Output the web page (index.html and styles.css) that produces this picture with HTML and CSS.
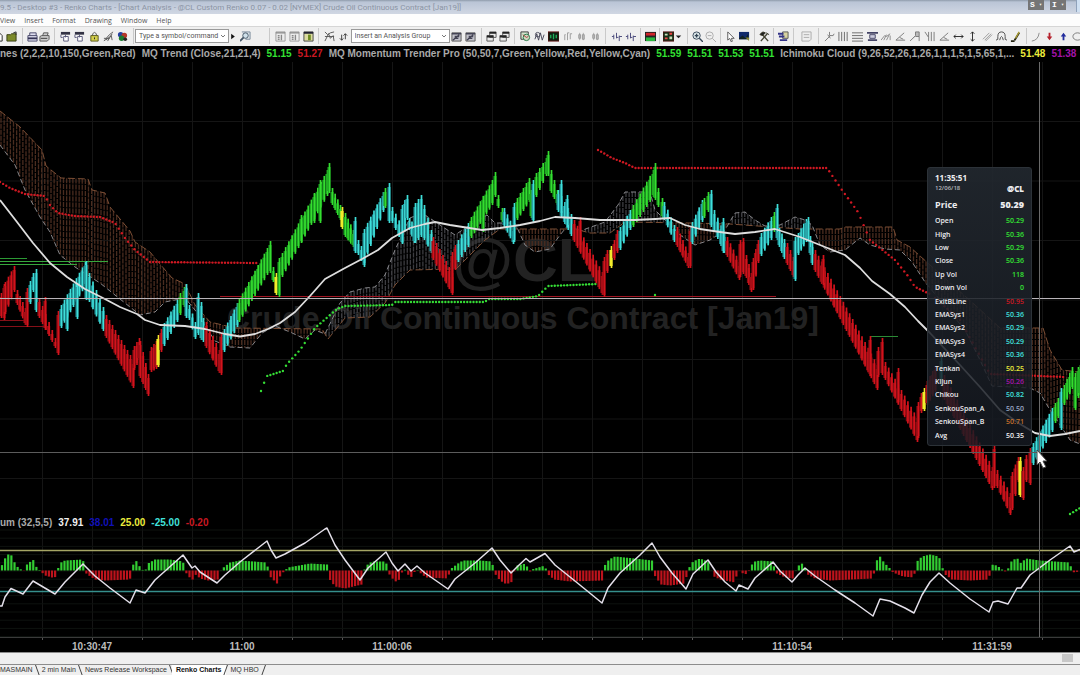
FILE: index.html
```html
<!DOCTYPE html>
<html lang="en">
<head>
<meta charset="utf-8">
<title>Renko Charts - Chart Analysis</title>
<link rel="stylesheet" href="styles.css">
</head>
<body>
<svg class="symbols" aria-hidden="true">
  <symbol id="doc" viewBox="0 0 12 12"><path d="M2 2h5l3 3v6H2z" fill="#fff" stroke="#222"/></symbol>
  <symbol id="folder" viewBox="0 0 12 12"><path d="M1 4h4l1-1h5v8H1z" fill="#7c8a2a" stroke="#333a10"/><path d="M8 2l3-1v3" fill="none" stroke="#222"/></symbol>
  <symbol id="save" viewBox="0 0 12 12"><path d="M1 5h10v6H1zM3 5V2h7v3" fill="#dde" stroke="#446"/><path d="M1 8h10" stroke="#335" stroke-width="2"/></symbol>
  <symbol id="print" viewBox="0 0 12 12"><path d="M1 6l2-1h8v4l-2 2H1zM4 5l1-3h5l-1 3" fill="#ccc" stroke="#555"/><path d="M2 8h7" stroke="#333"/></symbol>
  <symbol id="window" viewBox="0 0 12 12"><path d="M1 1h10v3H1z" fill="#334"/><path d="M4 6h5v5H4zM6 4v3M1 4v3h2" fill="#fff" stroke="#557"/></symbol>
  <symbol id="lock" viewBox="0 0 12 12"><path d="M4 5V3q2-3 4 0v2" fill="none" stroke="#555"/><path d="M2 5h8v6H2z" fill="#d3cf4c" stroke="#55551a"/><path d="M6 7v2" stroke="#222"/></symbol>
  <symbol id="draw" viewBox="0 0 12 12"><path d="M1 11L7 4l4-3M3 10l6-5 1 5M1 8h6M5 11l5-8" fill="none" stroke="#555"/></symbol>
  <symbol id="palette" viewBox="0 0 12 12"><circle cx="4" cy="4" r="3" fill="#253fa0"/><circle cx="8" cy="5" r="3" fill="#b5372a"/><circle cx="5" cy="8" r="3" fill="#1c7a31"/><circle cx="9" cy="9" r="2" fill="#222"/></symbol>
  <symbol id="find" viewBox="0 0 12 12"><path d="M2 1h9v8H6" fill="#dde3e8" stroke="#789"/><circle cx="6" cy="5" r="3" fill="#cfe0ea" stroke="#456"/><path d="M4 7l-4 4" stroke="#456" stroke-width="2"/></symbol>
  <symbol id="panel" viewBox="0 0 12 12"><path d="M1 1h10v10H1z" fill="#eee" stroke="#999"/><path d="M1 2h10M3 5h2M3 7h2M3 9h2M7 4v6" stroke="#888" stroke-width="1.5"/></symbol>
  <symbol id="panelhot" viewBox="0 0 12 12"><path d="M1 1h10v10H1z" fill="#dcdca0" stroke="#444"/><path d="M1 2h10" stroke="#223" stroke-width="2"/><path d="M7 4v6" stroke="#6d8a20" stroke-width="3"/></symbol>
  <symbol id="chart" viewBox="0 0 12 12"><path d="M1 1l3 3 3-2 4-1M1 11l4-8 2 5 3-3 1 6M1 6h10" fill="none" stroke="#555"/></symbol>
  <symbol id="arrows" viewBox="0 0 12 12"><path d="M4 4v6M2 8l2 2 2-2M8 9V3M6 5l2-2 2 2" fill="none" stroke="#333"/></symbol>
  <symbol id="formula" viewBox="0 0 12 12"><path d="M1 2h10v9H1z" fill="#c4c4cc" stroke="#555"/><path d="M1 3h10M2 10l7-6M4 6h5M3 8h5" stroke="#445" stroke-width="1.5"/></symbol>
  <symbol id="layers" viewBox="0 0 12 12"><path d="M4 1h7v6H4zM1 5h7v6H1z" fill="#e9e9e9" stroke="#555"/><path d="M4 2h7M1 6h7" stroke="#222" stroke-width="2"/></symbol>
  <symbol id="clock" viewBox="0 0 12 12"><path d="M1 1h8v8H1z" fill="#d2e7cf" stroke="#333"/><circle cx="7" cy="7" r="3.5" fill="#cfd9c1" stroke="#274"/><path d="M3 4l4 3 2-1" fill="none" stroke="#a33"/></symbol>
  <symbol id="wave" viewBox="0 0 12 12"><path d="M1 9L3 3l2 7 2-8 2 8 2-6" fill="none" stroke="#445"/><circle cx="4" cy="4" r="2.500" fill="none" stroke="#556"/></symbol>
  <symbol id="blackchart" viewBox="0 0 12 12"><path d="M0 1h12v10H0z" fill="#101c10" stroke="#611"/><path d="M3 8V4M6 9V3M9 8V4" stroke="#2a5" stroke-width="1.500"/></symbol>
  <symbol id="bars" viewBox="0 0 12 12"><path d="M3 10V4h1M6 10V2h2M9 9V3h2" fill="none" stroke="#999"/></symbol>
  <symbol id="candles" viewBox="0 0 12 12"><path d="M4 2v8M8 2v8" stroke="#aaa"/><path d="M3 4h2v4H3zM7 4h2v5H7z" fill="#bbb" stroke="#999"/></symbol>
  <symbol id="spacing" viewBox="0 0 12 12"><path d="M1 6h2M3 4v5M6 2v6M6 7h2M9 5v6M9 6h3" fill="none" stroke="#447"/></symbol>
  <symbol id="redgreen" viewBox="0 0 12 12"><path d="M0 1h12v10H0z" fill="#222"/><path d="M1 2h10v3H1z" fill="#d1242a"/><path d="M1 7h10v4H1z" fill="#29b63f"/></symbol>
  <symbol id="matrix" viewBox="0 0 12 12"><path d="M0 1h12v10H0z" fill="#143016" stroke="#511"/><path d="M2 3h3v2H2zM7 6h3v3H7z" fill="#cdb"/><path d="M7 3h3M2 8h3" stroke="#e44" stroke-width="2"/></symbol>
  <symbol id="zoomin" viewBox="0 0 12 12"><circle cx="5" cy="5" r="4" fill="#dde8ea" stroke="#345"/><path d="M8 8l4 4M3 5h4M5 3v4" stroke="#345" stroke-width="1.500"/></symbol>
  <symbol id="zoomout" viewBox="0 0 12 12"><circle cx="5" cy="5" r="4" fill="none" stroke="#aaa"/><path d="M8 8l4 4M3 5h4" stroke="#aaa"/></symbol>
  <symbol id="pointer" viewBox="0 0 12 12"><path d="M3 1v9l2-2 2 4 1-1-1-3h3z" fill="#fff" stroke="#555"/></symbol>
  <symbol id="screen" viewBox="0 0 12 12"><path d="M0 1h11v8H0z" fill="#112a6b"/><path d="M0 8l4-3 3 3 3-5v6H0z" fill="#122"/><path d="M7 7h4v4z" fill="#883"/></symbol>
  <symbol id="hammer" viewBox="0 0 12 12"><path d="M2 11l7-8M2 2l8 9" stroke="#443" stroke-width="1.500"/><path d="M1 4l3-3 3 1-3 3zM8 2l3 2" fill="#222" stroke="#332"/></symbol>
  <symbol id="strategy" viewBox="0 0 12 12"><path d="M5 1h6v7H5z" fill="#d8d3a0" stroke="#555"/><path d="M0 3h6M1 6h6M2 10h8" stroke="#338" stroke-width="2"/></symbol>
  <symbol id="note" viewBox="0 0 12 12"><path d="M1 1h10v8l-2 2H1zM3 4h6M3 7h6" fill="#eee" stroke="#aaa"/></symbol>
  <symbol id="wrench" viewBox="0 0 12 12"><path d="M1 11l6-6M6 1v4h4l1-2M4 4l3 4" fill="none" stroke="#777"/></symbol>
  <symbol id="vlines" viewBox="0 0 12 12"><path d="M1 1v10M4 1v10M7 1v10M10 1v10" stroke="#666"/></symbol>
  <symbol id="hlines" viewBox="0 0 12 12"><path d="M0 2h12M0 5h12M0 8h12M0 11h12" stroke="#666"/></symbol>
  <symbol id="range" viewBox="0 0 12 12"><path d="M0 2h12M1 10h10" stroke="#446" stroke-width="2"/><path d="M3 4h6v4H3z" fill="#ccd" stroke="#446"/></symbol>
  <symbol id="arc" viewBox="0 0 12 12"><path d="M0 10l4-5 2 1 4-3M3 10l3-6M6 10l3-6M10 10V5" fill="none" stroke="#888"/></symbol>
  <symbol id="angle" viewBox="0 0 12 12"><path d="M1 10h10M1 10l9-8M5 7l4 2" fill="none" stroke="#777"/></symbol>
  <symbol id="flag" viewBox="0 0 12 12"><path d="M0 11l6-6V1h4v5H6M10 6v5" fill="#bbb" stroke="#777"/></symbol>
  <symbol id="fan" viewBox="0 0 12 12"><path d="M1 1l4 6V1M5 7v4M8 1v10M11 1v10" fill="none" stroke="#777"/></symbol>
  <symbol id="harrow" viewBox="0 0 12 12"><path d="M1 6h10M3 4L1 6l2 2M9 4l2 2-2 2" fill="none" stroke="#222"/></symbol>
  <symbol id="varrow" viewBox="0 0 12 12"><path d="M6 1v10M4 3l2-2 2 2M4 9l2 2 2-2" fill="none" stroke="#222"/></symbol>
  <symbol id="channel" viewBox="0 0 12 12"><path d="M1 9l7-7M3 10l7-7M4 11l7-7" stroke="#999"/></symbol>
  <symbol id="arch" viewBox="0 0 12 12"><path d="M0 10q3 0 2-4 0-5 4-5t4 5q-1 4 2 4M4 10q2-8 4 0" fill="none" stroke="#444"/></symbol>
  <symbol id="pen" viewBox="0 0 12 12"><path d="M1 11h4M5 10l5-8" stroke="#221" stroke-width="2"/><path d="M6 8l4-7" stroke="#a89b36" stroke-width="1.500"/></symbol>
  <symbol id="curve" viewBox="0 0 12 12"><path d="M2 11q7-1 8-9" fill="none" stroke="#888"/></symbol>
  <symbol id="down" viewBox="0 0 12 12"><path d="M5 2h2v4h2l-3 4-3-4h2z" fill="#b5202c"/></symbol>
  <symbol id="up" viewBox="0 0 12 12"><path d="M5 10h2V6h2L6 2 3 6h2z" fill="#222c9d"/></symbol>
  <symbol id="oval" viewBox="0 0 12 12"><ellipse cx="6" cy="6" rx="5" ry="4" fill="none" stroke="#777"/></symbol>
  <symbol id="play" viewBox="0 0 6 12"><path d="M1 3l4 3-4 3z" fill="#111"/></symbol>
  <symbol id="caret" viewBox="0 0 6 12"><path d="M0 5h6L3 8z" fill="#222"/></symbol>
</svg>

<header class="titlebar">
  <h1>9.5 - Desktop #3 - Renko Charts - [Chart Analysis - @CL Custom Renko 0.07 - 0.02 [NYMEX] Crude Oil Continuous Contract [Jan19]]</h1>
  <div class="title-tools">
    <button>S <span>▾</span></button>
    <button>I <span>▾</span></button>
    <i></i>
  </div>
</header>

<nav class="menu">
  <button>View</button><button>Insert</button><button>Format</button><button>Drawing</button><button>Window</button><button>Help</button>
</nav>

<div class="toolbar" role="toolbar" aria-label="Charting tools">
  <div class="group cut" data-icons="doc folder"></div>
  <div class="group" data-icons="save print"></div>
  <div class="group" data-icons="window window lock draw palette"></div>
  <div class="group command">
    <div class="combo"><input type="text" aria-label="Symbol or command" placeholder="Type a symbol/command"><svg viewBox="0 0 6 4"><path d="M1 1l2 2 2-2"/></svg></div>
    <button class="thin" aria-label="Run"><svg><use href="#play"/></svg></button>
    <button aria-label="Look up symbol"><svg><use href="#find"/></svg></button>
  </div>
  <div class="group" data-icons="panel panel panelhot"></div>
  <div class="group analysis">
    <button aria-label="chart"><svg><use href="#chart"/></svg></button>
    <button aria-label="arrows"><svg><use href="#arrows"/></svg></button>
    <div class="combo"><select aria-label="Analysis group"><option>Insert an Analysis Group</option></select><svg viewBox="0 0 6 4"><path d="M1 1l2 2 2-2"/></svg></div>
    <button aria-label="formula"><svg><use href="#formula"/></svg></button>
    <button aria-label="edit formula"><svg><use href="#formula"/></svg></button>
  </div>
  <div class="group" data-icons="layers layers"></div>
  <div class="group" data-icons="clock wave blackchart bars candles candles"></div>
  <div class="group" data-icons="spacing spacing"></div>
  <div class="group" data-icons="redgreen"></div>
  <div class="group" data-icons="matrix caret"></div>
  <div class="group" data-icons="zoomin zoomout"></div>
  <div class="group" data-icons="pointer screen"></div>
  <div class="group" data-icons="hammer"></div>
  <div class="group" data-icons="strategy"></div>
  <div class="group" data-icons="note"></div>
  <div class="group" data-icons="wrench vlines hlines range arc angle flag fan angle harrow varrow channel arch pen"></div>
  <div class="group cut" data-icons="curve down up oval"></div>
</div>

<main class="chart">
  <svg class="plot" id="plot" viewBox="0 46 1080 606" preserveAspectRatio="xMaxYMin slice" role="img" aria-label="@CL Renko chart with Ichimoku cloud and momentum"></svg>

  <div class="legend legend-top">
    <span>nes (2,2,2,10,150,Green,Red)</span>
    <span>MQ Trend (Close,21,21,4)</span><b class="green">51.15</b><b class="red">51.27</b>
    <span>MQ Momentum Trender Pro (50,50,7,Green,Yellow,Red,Yellow,Cyan)</span><b class="green">51.59</b><b class="green">51.51</b><b class="green">51.53</b><b class="green">51.51</b>
    <span>Ichimoku Cloud (9,26,52,26,1,26,1,1,1,5,1,5,65,1,...</span><b class="yellow">51.48</b><b class="magenta">51.38</b>
  </div>
  <div class="legend legend-momentum">
    <span>um (32,5,5)</span><b class="white">37.91</b><b class="blue">38.01</b><b class="yellow">25.00</b><b class="cyan">-25.00</b><b class="red">-0.20</b>
  </div>

  <aside class="datatip">
    <div class="tip-time">11:35:51</div>
    <div class="tip-date"><span>12/06/18</span><b>@CL</b></div>
    <div class="tip-price"><span>Price</span><b>50.29</b></div>
    <table>
      <tr><th>Open</th><td class="green">50.29</td></tr>
      <tr><th>High</th><td class="green">50.36</td></tr>
      <tr><th>Low</th><td class="green">50.29</td></tr>
      <tr><th>Close</th><td class="green">50.36</td></tr>
      <tr><th>Up Vol</th><td class="green">118</td></tr>
      <tr><th>Down Vol</th><td class="green">0</td></tr>
      <tr><th>ExitBLine</th><td class="red">50.95</td></tr>
      <tr><th>EMASys1</th><td class="cyan">50.36</td></tr>
      <tr><th>EMASys2</th><td class="cyan">50.29</td></tr>
      <tr><th>EMASys3</th><td class="cyan">50.29</td></tr>
      <tr><th>EMASys4</th><td class="cyan">50.36</td></tr>
      <tr><th>Tenkan</th><td class="yellow">50.25</td></tr>
      <tr><th>Kijun</th><td class="magenta">50.26</td></tr>
      <tr><th>Chikou</th><td class="cyan">50.82</td></tr>
      <tr><th>SenkouSpan_A</th><td class="steel">50.50</td></tr>
      <tr><th>SenkouSpan_B</th><td class="orange">50.71</td></tr>
      <tr><th>Avg</th><td class="white">50.35</td></tr>
    </table>
  </aside>
  <svg class="cursor" viewBox="0 0 12 20" aria-hidden="true"><path d="M1 1v15l3-3 3 6 3-1-3-6h4z"/></svg>
</main>

<div class="scroll"><i></i></div>
<nav class="tabs">
  <button>MASMAIN</button><button>2 min Main</button><button>News Release Workspace</button><button class="active">Renko Charts</button><button>MQ HBO</button>
</nav>
<script src="chart.js"></script>
</body>
</html>
```
FILE: styles.css
```css
* { box-sizing: border-box; }
body {
  margin: 0;
  min-height: 100vh;
  display: flex;
  flex-direction: column;
  overflow: hidden;
  background: #efefef;
  font-family: "Open Sans", "Noto Sans", sans-serif;
}
button { border: 0; padding: 0; margin: 0; background: none; font: inherit; color: inherit; }
.symbols { display: none; }

.titlebar {
  display: flex;
  justify-content: space-between;
  height: 14px;
  overflow: hidden;
  background: linear-gradient(#8f9bab 0, #bac5d6 2px, #d0d7e3);
}
.titlebar h1 { margin: 0; font: 400 8px/15px Roboto, sans-serif; color: #8b94a4; white-space: nowrap; }
.title-tools { display: flex; gap: 6px; }
.title-tools button {
  display: flex;
  justify-content: space-around;
  width: 16px; height: 10px;
  background: #757575; color: #fff;
  font: bold 8px/10px "Liberation Mono", monospace;
  white-space: nowrap;
}
.title-tools button span { font-size: 5px; }
.title-tools i { width: 4px; height: 12px; margin-left: 4px; background: #cfe0f2; border-left: 1px solid #8fa2bb; }

.menu { display: flex; gap: 9px; height: 12px; background: #fdfdfd; color: #555; font-size: 7px; line-height: 13px; }

.toolbar {
  display: grid;
  grid-template-columns:
    minmax(0, 23fr) minmax(0, 32fr) minmax(0, 79fr) minmax(0, 136fr) minmax(0, 49fr) minmax(0, 163fr)
    minmax(0, 33fr) minmax(0, 91fr) minmax(0, 35fr) minmax(0, 19fr) minmax(0, 28fr) minmax(0, 33fr)
    minmax(0, 34fr) minmax(0, 19fr) minmax(0, 20fr) minmax(0, 25fr) minmax(0, 208fr) minmax(0, 53fr);
  height: 20px;
  padding: 1px 0 2px;
  overflow: hidden;
  background: #efefef;
  border-top: 1px solid #d6d6d6;
}
.group { display: flex; align-items: center; padding: 0 3px; border-right: 1px solid #c9c9c9; }
.group button { flex: 1; display: flex; justify-content: center; min-width: 0; }
.group button svg { width: 11px; height: 11px; flex: none; }
.group.cut { padding: 0 1px; border-right: 0; overflow: hidden; }
.group.cut button { flex: 0 0 14px; }
.group.cut:first-child { border-right: 1px solid #c9c9c9; padding: 0; }
.group.cut:first-child button:first-child { flex-basis: 4px; justify-content: flex-end; }
.combo { position: relative; height: 14px; border: 1px solid #9a9a9a; background: #fff; }
.combo input, .combo select {
  appearance: none;
  display: block;
  width: 100%; height: 12px;
  padding: 0 3px; border: 0;
  background: none;
  font: 7px/12px Roboto, sans-serif;
  color: #555;
}
.combo input::placeholder { color: #555; opacity: 1; }
.combo svg { position: absolute; right: 2px; top: 4px; width: 6px; height: 4px; fill: none; stroke: #777; }
.group.command { padding: 0 0 0 1px; }
.command .combo { flex: 0 0 94px; }
.command button { flex: 0 0 17px; }
.command .thin { flex-basis: 8px; }
.command .thin svg { width: 6px; }
.analysis .combo { flex: 0 0 99px; }

.chart { position: relative; flex: 1; min-height: 300px; background: #000; overflow: hidden; }
.plot { display: block; position: absolute; inset: 0; width: 100%; height: 100%; font-family: "Liberation Sans", Arial, sans-serif; font-weight: bold; }
.plot .watermark { fill: #222; }
.plot .axis { fill: #bdbdbd; font-size: 10px; text-anchor: middle; }

.legend { position: absolute; left: 0; display: flex; gap: 6px; font: bold 10px/12px "Liberation Sans", Arial, sans-serif; color: #a9a9a9; white-space: nowrap; }
.legend b { font-weight: bold; }
.legend-top { top: 2px; }
.legend-momentum { top: 471px; gap: 6px; }

.green { color: #33e233; }
.red { color: #c91822; }
.yellow { color: #ecec3c; }
.cyan { color: #40e0dc; }
.magenta { color: #a313a8; }
.blue { color: #1010b8; }
.white { color: #f0f0f0; }
.steel { color: #9aa9c4; }
.orange { color: #c4702c; }

.datatip {
  position: absolute;
  right: 48px; top: 121px;
  width: 105px;
  padding: 5px 7px 3px;
  border: 1px solid #2c3238;
  border-radius: 3px;
  background: linear-gradient(rgba(34, 40, 47, .92), rgba(22, 26, 34, .82));
  color: #ededf0;
  font-size: 7px;
  font-weight: 600;
}
.tip-time { font-size: 8px; line-height: 9px; font-weight: 700; }
.tip-date, .tip-price { display: flex; justify-content: space-between; align-items: center; }
.tip-date { height: 12px; }
.tip-date span { font-size: 6px; color: #b6b9bd; }
.tip-date b { font-size: 8px; }
.tip-price { height: 20px; font-size: 9px; font-weight: 700; }
.datatip table { width: 100%; height: 228px; border-collapse: collapse; line-height: 9px; }
.datatip th, .datatip td { padding: 0; text-align: left; font-weight: 600; }
.datatip td { text-align: right; }

.cursor { position: absolute; right: 32px; top: 403px; width: 12px; height: 20px; fill: #fff; stroke: #444; }

.scroll { height: 13px; display: flex; justify-content: flex-end; padding: 1px 7px 2px; background: #efefef; border-top: 1px solid #8c8c8c; border-bottom: 1px solid #8c8c8c; }
.scroll i { width: 11px; background: #c8c8c8; }

.tabs { display: flex; height: 10px; overflow: hidden; font: 7px/10px "Liberation Sans", Arial, sans-serif; color: #333; }
.tabs button { position: relative; padding: 0 5px 0 4px; }
.tabs button:first-child { padding-left: 0; }
.tabs button::after { content: ""; position: absolute; right: 0; top: 0; height: 11px; border-right: 1px solid #444; transform: skewX(20deg); }
.tabs button:nth-child(n+4)::after { transform: skewX(-20deg); }
.tabs .active { background: #fff; font-weight: bold; color: #111; }
```
FILE: chart.js
```js
document.querySelectorAll('[data-icons]').forEach(group => {
  group.innerHTML = group.dataset.icons.split(' ').map(name =>
    `<button aria-label="${name}"><svg><use href="#${name}"/></svg></button>`).join('');
});

const STEP = 3.125;
const out = [];
const line = (x1, y1, x2, y2, color, width = 1, extra = '') =>
  out.push(`<line x1="${x1}" y1="${y1}" x2="${x2}" y2="${y2}" stroke="${color}" stroke-width="${width}" ${extra}/>`);
const parse = s => s.trim().split(/\s+/).map(p => p.split(',').map(Number));
const at = (pts, x) => {
  for (let i = 1; i < pts.length; i++) {
    if (x <= pts[i][0]) {
      const [a, b] = [pts[i - 1], pts[i]];
      return a[1] + (b[1] - a[1]) * (x - a[0]) / (b[0] - a[0] || 1);
    }
  }
  return pts[pts.length - 1][1];
};
const poly = (s, color, width, extra = '') =>
  out.push(`<polyline points="${s}" fill="none" stroke="${color}" stroke-width="${width}" stroke-linejoin="round" ${extra}/>`);

// Grid
for (let x = 42.5; x < 1080; x += 50) { line(x, 62, x, 637, '#151515'); line(x, 637, x, 640, '#555'); }
for (let y = 121.5; y < 500; y += 59.5) line(0, y, 1080, y, '#151515');
for (let y = 530; y < 637; y += 8.2) line(0, y, 1080, y, '#0e120f');
line(0, 637.5, 1080, 637.5, '#3a3a3a');

// Watermark
out.push('<text class="watermark" x="524" y="281" font-size="62" text-anchor="middle">@CL</text>');
out.push('<text class="watermark" x="523" y="329" font-size="32" text-anchor="middle">Crude Oil Continuous Contract [Jan19]</text>');

// Ichimoku cloud
const spanB = '0,111 20,127 42,150 46,166 61,178 88,179 92,190 105,193 110,207 130,231 135,242 150,252 160,264 172,278 185,284 195,305 210,322 235,328 322,329 328,339 345,318 370,317 385,303 395,285 410,270 456,269 470,255 485,240 500,229 575,229 590,233 610,233 625,222 690,223 730,224 800,229 840,229 845,227 893,227 897,240 910,247 930,265 975,305 1000,328 1043,328 1050,350 1062,370 1080,372';
const spanA = '0,145 15,165 25,190 40,217 50,232 60,255 75,267 100,283 140,315 155,312 165,302 185,298 195,310 215,341 230,347 250,348 262,333 275,326 290,332 305,339 315,330 325,334 340,303 350,292 365,288 375,287 385,275 395,250 410,218 422,213 440,225 455,235 470,225 487,215 495,223 515,223 525,245 535,252 550,249 560,235 570,223 580,231 605,222 618,205 625,192 650,192 655,210 665,220 680,235 695,245 710,240 725,230 735,213 745,212 755,220 765,226 780,225 795,217 805,220 812,225 820,245 830,252 845,250 860,238 870,245 885,249 900,250 912,262 925,282 965,330 980,360 992,386 1030,388 1040,393 1050,410 1070,440 1080,444';
const A = parse(spanA), B = parse(spanB);
for (let x = 1; x < 1080; x += STEP) {
  const a = at(A, x), b = at(B, x);
  line(x, Math.min(a, b), x, Math.max(a, b), b < a ? '#4a2c1f' : '#3d3d41', 1.3, 'stroke-dasharray="5 1"');
}
poly(spanB, '#7d4f35', 1, 'stroke-dasharray="7 3"');
poly(spanA, '#86868a', 1, 'stroke-dasharray="5 3"');

// Support and resistance levels
[[0, 27, 258.5, '#2c9a35'], [0, 108, 261.5, '#36a83c'], [0, 77, 264.5, '#36a83c'], [870, 898, 336.5, '#2b8a35'],
 [0, 28, 320.5, '#851018'], [0, 45, 326.5, '#851018'], [220, 776, 296.5, '#a01522']]
  .forEach(([x1, x2, y, c]) => line(x1, y, x2, y, c));

// Trailing stop dots
const dots = (s, color, step = STEP) => {
  const p = parse(s);
  for (let x = p[0][0]; x <= p[p.length - 1][0]; x += step)
    out.push(`<circle cx="${x}" cy="${at(p, x)}" r="1.2" fill="${color}"/>`);
};
dots('0,182 10,188 25,194 45,196 50,205 58,213 75,216 100,217 115,223 125,238 135,250 150,262 258,263', '#cf1822');
dots('598,150 612,158 625,163 635,168 827,168 842,190 858,212 870,240 895,260 908,276 915,287 932,295', '#cf1822');
dots('935,298 960,320 990,374 1066,377', '#cf1822');
dots('261,391 264,383 267,376 283,371 287,364 300,350 315,328 337,309 345,306 392,305 395,302 485,302 488,299 520,299 538,296 548,286 597,284', '#35dd35');
dots('655,295 656,295', '#35dd35');
dots('1070,514 1080,508', '#35dd35');

// Renko bars: colour, x, top, bottom at the first bar, then the same at the last
const shades = { r: ['#d3131c', '#8e0d14'], c: ['#3fdfda', '#1c858b'], g: ['#35dd30', '#17931e'], y: ['#f2ec2c', '#f2ec2c'] };
`r 1 293 318 4 284 320
r 5 282 314 14 266 292
r 17 290 305 25 308 325
r 27 288 327 27 288 327
c 30 281 304 33 273 292
c 36 269 312 36 269 312
r 39 298 318 55 338 348
r 45 297 330 45 297 330
r 58 311 355 58 311 355
c 61 305 328 85 262 286
c 67 300 331 67 300 331
c 77 283 319 77 283 319
c 86 261 300 86 261 300
c 89 273 302 103 307 331
r 106 315 338 133 360 388
r 134 346 370 139 338 360
r 140 341 378 148 374 396
r 151 347 372 156 341 369
y 158 335 367 158 335 367
r 161 329 352 161 329 352
c 164 323 346 177 300 322
g 180 293 315 184 287 307
c 186 284 318 186 284 318
c 189 305 320 195 322 339
c 198 293 335 198 293 335
c 201 302 340 203 318 342
r 206 322 348 219 350 373
r 221 333 375 221 333 375
c 224 329 352 237 303 327
g 239 299 322 267 248 275
g 270 241 273 273 267 282
y 276 273 295 276 273 295
g 279 258 297 279 258 297
g 282 253 277 327 170 196
g 301 215 243 301 215 243
g 314 193 223 314 193 223
g 320 180 223 320 180 223
g 329 163 193 329 163 193
g 332 188 205 340 205 220
y 342 207 229 342 207 229
g 345 213 237 353 230 247
c 355 217 253 355 217 253
c 358 240 255 364 252 267
c 364 229 263 383 192 212
g 385 188 208 385 188 208
c 389 183 223 389 183 223
c 392 207 223 402 227 244
c 402 205 243 407 195 220
c 409 218 230 414 225 243
c 415 203 243 421 195 237
c 424 205 240 431 230 253
r 433 237 260 452 273 295
r 452 252 293 455 245 270
c 458 240 262 468 223 247
g 471 217 238 492 180 205
g 483 196 232 483 196 232
g 495 172 197 495 172 197
g 498 195 208 502 208 222
c 504 208 227 513 227 244
c 514 203 242 514 203 242
g 517 198 220 529 178 202
g 531 190 218 531 190 218
c 533 180 222 533 180 222
g 536 173 197 546 158 176
g 548 151 176 548 151 176
g 551 170 193 557 190 205
c 558 190 212 571 214 236
c 561 180 213 561 180 213
c 567 195 227 567 195 227
r 574 220 242 602 272 295
r 580 217 245 580 217 245
r 604 257 297 604 257 297
r 607 250 273 607 250 273
y 611 246 268 611 246 268
r 614 240 260 617 230 253
c 620 227 250 630 210 230
g 633 205 227 653 170 197
g 655 163 200 655 163 200
g 658 188 207 662 198 218
c 664 202 220 674 225 242
r 677 227 247 688 253 268
r 690 227 268 690 227 268
c 692 222 244 702 200 222
g 704 198 218 708 192 212
c 711 190 227 711 190 227
c 714 210 232 724 233 253
c 723 218 253 723 218 253
r 727 237 257 739 262 280
r 740 240 277 743 238 274
r 746 255 278 751 273 292
r 753 258 290 758 240 263
c 761 233 256 771 217 240
g 774 212 232 774 212 232
c 777 204 240 777 204 240
c 779 228 247 784 239 259
r 787 243 265 793 257 277
c 795 237 281 795 237 281
c 798 233 255 806 219 242
c 808 217 242 808 217 242
c 810 236 255 812 243 265
r 815 250 272 877 365 390
r 823 255 285 823 255 285
r 870 336 376 870 336 376
r 878 347 377 882 338 375
r 885 362 380 917 418 442
r 898 368 402 898 368 402
r 918 402 438 921 393 413
y 924 388 411 924 388 411
r 927 381 405 935 366 392
c 941 357 385 941 357 385
r 944 375 400 992 467 490
r 994 445 488 994 445 488
r 997 470 488 1010 493 515
r 1012 472 510 1018 457 482
y 1020 457 497 1020 457 497
r 1023 467 500 1023 467 500
r 1026 455 482 1030 448 485
c 1033 443 465 1052 408 432
g 1055 403 423 1058 398 418
c 1061 388 430 1061 388 430
g 1064 385 405 1072 367 389
g 1075 373 410 1075 373 410
g 1078 367 398 1080 365 395`.split('\n').forEach(row => {
  const [k, ...v] = row.split(' ');
  const [x0, t0, b0, x1, t1, b1] = v.map(Number);
  const n = Math.max(0, Math.round((x1 - x0) / STEP));
  for (let i = 0; i <= n; i++) {
    const f = n ? i / n : 0;
    const x = x0 + (x1 - x0) * f, t = t0 + (t1 - t0) * f, b = b0 + (b1 - b0) * f;
    line(x, t + 4, x, b - 2, shades[k][1], 3.2);
    line(x + 0.5, t, x + 0.5, b, shades[k][0], 1.7);
  }
});

// Average
poly('0,200 17,222 33,243 50,263 67,277 85,289 103,298 120,307 137,314 145,320 160,325 185,326 205,329 225,334 240,336.5 255,334 268,329 280,323 295,312 310,296 325,279 345,268 362,259 378,250 392,238 410,228 425,224 435,222 450,225 482,230 500,228 520,225 540,221 555,217 575,218 600,220 635,220 655,219 670,218 685,225 700,229 720,232 735,234 755,232 775,229 800,237 820,245 845,255 860,268 872,281 890,294 905,307 918,321 930,333 960,365 980,387 1000,410 1020,424 1035,433 1050,436 1065,434 1080,431', '#dedede', 1.8);

// Momentum histogram
const H = parse('0,1 5,12 8,16 11,16 14,9 18,3 21,1 23,-2 27,6 33,11 36,4 39,1 42,-2 45,-5 52,-7 55,-7 58,2 61,8 65,10 83,11 85,-2 89,-5 95,-9 105,-10 130,-9 132,4 136,10 139,5 142,1 145,-1 148,7 155,11 170,11 183,9 185,-1 192,-10 196,-4 200,-8 208,-10 218,-9 221,1 230,8 240,10 267,8 269,-5 277,-13 281,-4 284,-1 288,3 310,7 327,6 329,-8 335,-16 345,-18 362,-14 365,4 372,9 386,9 388,-2 394,-10 398,-12 401,-3 405,1 408,-4 411,-7 414,-2 417,1 421,-3 426,-7 448,-8 450,1 458,7 463,10 480,10 492,9 494,-2 500,-10 505,-13 511,-13 514,-2 517,5 526,7 529,-2 532,1 545,5 547,-3 554,-9 570,-11 602,-10 604,4 609,11 615,14 635,12 652,10 654,-4 661,-14 670,-15 685,-13 688,1 693,9 700,12 708,9 711,1 714,-6 720,-9 735,-12 738,1 743,-3 748,-4 750,4 755,9 760,10 773,9 775,-2 785,-7 793,-8 797,4 804,8 806,-3 815,-8 830,-10 873,-8 876,9 880,14 884,8 890,2 893,-2 903,-6 914,-7 916,8 922,14 930,16 939,14 942,4 945,-4 952,-9 970,-10 989,-9 991,6 997,5 1002,1 1007,-2 1010,8 1017,13 1020,7 1026,12 1040,10 1070,8 1072,-2 1080,-1');
for (let x = 2; x < 1080; x += STEP) {
  const h = at(H, x);
  line(x, 570.5, x, 570.5 - h, h > 0 ? '#32cc32' : '#bd131c', 2.2);
}
line(0, 550.5, 1080, 550.5, '#a5a565', 1.3);
line(0, 591.5, 1080, 591.5, '#358f8c', 1.5);
poly('0,606 2,606 5,597 11,588.5 23,594 33,581 55,594 65,582 83,564 95,576 110,588 130,603 136,590 145,593 155,580 183,555 192,568 195,566 200,572 217,583 225,575 240,562 267,541 271,550 276,558 285,554 305,543 325,529 327,528 335,545 345,560 360,580 368,568 386,552 392,563 398,571 405,564 411,571 417,566 425,573 448,589 455,579 475,563 492,548 500,560 511,573 518,566 526,558.5 530,562 545,553.5 555,565 575,581 602,603 608,588 620,573 640,555 652,543 660,557 672,573 686,589 693,574 708,560 716,572 725,582 736,591 739,585 748,589 755,578 773,562 780,571 792,582 798,575 805,568 815,576 835,590 855,603 873,616 880,599 890,601 905,608 914,613 922,595 930,582 939,573 950,583 970,599 989,612 993,602 998,601 1008,604 1017,588 1021,588 1030,575 1050,560 1070,546 1074,552 1080,549.5', '#e4e0ea', 1.5);

// Crosshair and price line
line(0, 298.5, 1080, 298.5, '#b9b4b9');
line(0, 452.5, 1080, 452.5, '#5c5c5c');
line(1039.5, 62, 1039.5, 637, '#6a6a6a');

[['10:30:47', 92], ['11:00', 242], ['11:00:06', 392], ['11:10:54', 792], ['11:31:59', 992]]
  .forEach(([t, x]) => out.push(`<text class="axis" x="${x}" y="650">${t}</text>`));

document.getElementById('plot').innerHTML = out.join('');
```
